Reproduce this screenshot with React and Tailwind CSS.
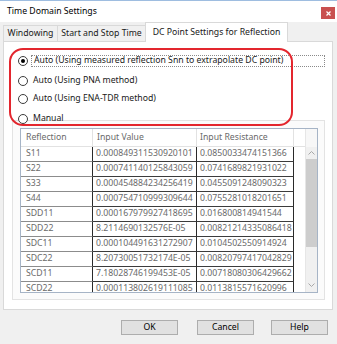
import React from 'react';

const rows = [
  ['S11', '0.000849311530920101', '0.0850033474151366'],
  ['S22', '0.000741140125843059', '0.0741689821931022'],
  ['S33', '0.000454884234256419', '0.0455091248090323'],
  ['S44', '0.000754710999309644', '0.0755281018201651'],
  ['SDD11', '0.000167979927418695', '0.016800814941544'],
  ['SDD22', '8.2114690132576E-05', '0.00821214335086418'],
  ['SDC11', '0.000104491631272907', '0.0104502550914924'],
  ['SDC22', '8.20730051732174E-05', '0.00820797417042829'],
  ['SCD11', '7.18028746199453E-05', '0.00718080306429662'],
  ['SCD22', '0.000113802619111085', '0.0113815571620996'],
];

const options = [
  { label: 'Auto (Using measured reflection Snn to extrapolate DC point)', checked: true, mt: '' },
  { label: 'Auto (Using PNA method)', mt: 'mt-[8px]' },
  { label: 'Auto (Using ENA-TDR method)', mt: 'mt-[6px]' },
  { label: 'Manual', mt: 'mt-[8px]' },
];

const Radio = ({ checked }) => (
  <span className="w-[10px] h-[10px] rounded-full border border-[#3c3c3c] bg-white flex items-center justify-center shrink-0">
    {checked && <span className="w-[4px] h-[4px] rounded-full bg-black" />}
  </span>
);

export default function App() {
  return (
    <div
      className="relative w-[337px] h-[344px] bg-[#f0f0f0] flex flex-col overflow-hidden border-t border-[#9ebde0] text-[8.7px] text-[#1a1a1a]"
      style={{ fontFamily: '"Noto Sans", "Open Sans", sans-serif' }}
    >
      {/* Title bar */}
      <div className="h-[21px] bg-white flex items-center justify-between pl-[7px] pr-[2px]">
        <span className="text-black">Time Domain Settings</span>
        <div className="w-[14px] h-[12px] mt-[3px] bg-[#c9504f] flex items-center justify-center">
          <svg width="5" height="5" viewBox="0 0 5 5">
            <path d="M0.5 0.5 L4.5 4.5 M4.5 0.5 L0.5 4.5" stroke="white" strokeWidth="1.2" />
          </svg>
        </div>
      </div>

      {/* Tabs */}
      <div className="h-[19px] flex items-end pl-[3px]">
        <div className="w-[55px] h-[16px] flex items-center justify-center bg-[#f0f0f0] border border-b-0 border-[#d9d9d9]">
          Windowing
        </div>
        <div className="w-[89px] h-[16px] -ml-px flex items-center justify-center bg-[#f0f0f0] border border-b-0 border-[#d9d9d9]">
          Start and Stop Time
        </div>
        <div className="w-[143px] h-[20px] -ml-px -mb-px relative z-10 flex items-center justify-center bg-white border border-b-0 border-[#d9d9d9]">
          DC Point Settings for Reflection
        </div>
      </div>

      {/* Panel */}
      <div className="ml-[3px] mr-[4px] h-[269px] bg-white border border-[#d9d9d9] pt-[13px] flex flex-col">
        {options.map((o) => (
          <div key={o.label} className={`relative z-10 h-[12px] flex items-center pl-[14px] ${o.mt}`}>
            <Radio checked={o.checked} />
            <span
              className={`ml-[3px] h-[12px] flex items-center px-[2px] ${
                o.checked ? 'flex-1 mr-[7px] border border-dotted border-[#8a8a8a]' : ''
              }`}
            >
              {o.label}
            </span>
          </div>
        ))}

        {/* Table box */}
        <div className="-mt-[5px] ml-[8px] mr-[7px] h-[180px] border border-[#e3e3e3] bg-[#fbfbfb] pl-[7px] pt-[7px] pr-[6px]">
          <div className="h-[165px] border border-[#a6b4c6] bg-white flex overflow-hidden text-[#6a6a6a]">
            <div className="flex-1 flex flex-col overflow-hidden">
              <div className="h-[18px] shrink-0 flex border-b border-[#e2e2e2]">
                <div className="w-[72px] pl-[5px] flex items-center border-r border-[#e2e2e2]">Reflection</div>
                <div className="w-[104px] pl-[4px] flex items-center border-r border-[#e2e2e2]">Input Value</div>
                <div className="w-[97px] pl-[3px] flex items-center border-r border-[#e2e2e2]">Input Resistance</div>
              </div>
              {rows.map((r) => (
                <div key={r[0]} className="h-[15px] shrink-0 flex">
                  <div className="w-[72px] pl-[5px] flex items-center border-b border-[#8c8c8c] border-r-[1.5px] border-r-[#2a2a2a]">
                    {r[0]}
                  </div>
                  <div className="w-[104px] pl-[3px] flex items-center border-b border-[#3c3c3c] border-r-[1.5px] border-r-[#2a2a2a] whitespace-nowrap overflow-hidden">
                    {r[1]}
                  </div>
                  <div className="w-[97px] pl-[3px] flex items-center border-b border-[#3c3c3c] border-r-[1.5px] border-r-[#2a2a2a] whitespace-nowrap overflow-hidden">
                    {r[2]}
                  </div>
                </div>
              ))}
            </div>

            {/* Scrollbar */}
            <div className="w-[12px] shrink-0 flex flex-col bg-[#f0f0f0] border-l border-[#e6e6e6]">
              <div className="h-[18px] bg-[#f7f7f7]" />
              <div className="h-[12px] flex items-center justify-center">
                <svg width="7" height="4" viewBox="0 0 7 4">
                  <path d="M0.5 3.5 L3.5 0.5 L6.5 3.5" fill="none" stroke="#a8a8a8" strokeWidth="1" />
                </svg>
              </div>
              <div className="h-[88px] bg-[#cdcdcd]" />
              <div className="flex-1" />
              <div className="h-[12px] mb-[1px] flex items-center justify-center">
                <svg width="7" height="4" viewBox="0 0 7 4">
                  <path d="M0.5 0.5 L3.5 3.5 L6.5 0.5" fill="none" stroke="#a8a8a8" strokeWidth="1" />
                </svg>
              </div>
            </div>
          </div>
        </div>
      </div>

      {/* Buttons */}
      <div className="mt-[10px] flex justify-end pr-[9px]">
        {['OK', 'Cancel', 'Help'].map((b, i) => (
          <button
            key={b}
            className={`w-[57px] h-[15px] bg-[#e1e1e1] border border-[#adadad] text-black flex items-center justify-center ${
              i > 0 ? (i === 1 ? 'ml-[19px]' : 'ml-[17px]') : ''
            }`}
          >
            {b}
          </button>
        ))}
      </div>

      {/* Red annotation outline */}
      <div className="absolute left-[9px] top-[47px] w-[284px] h-[78px] border-2 border-[#e3262e] rounded-[14px] pointer-events-none z-20" />
    </div>
  );
}
